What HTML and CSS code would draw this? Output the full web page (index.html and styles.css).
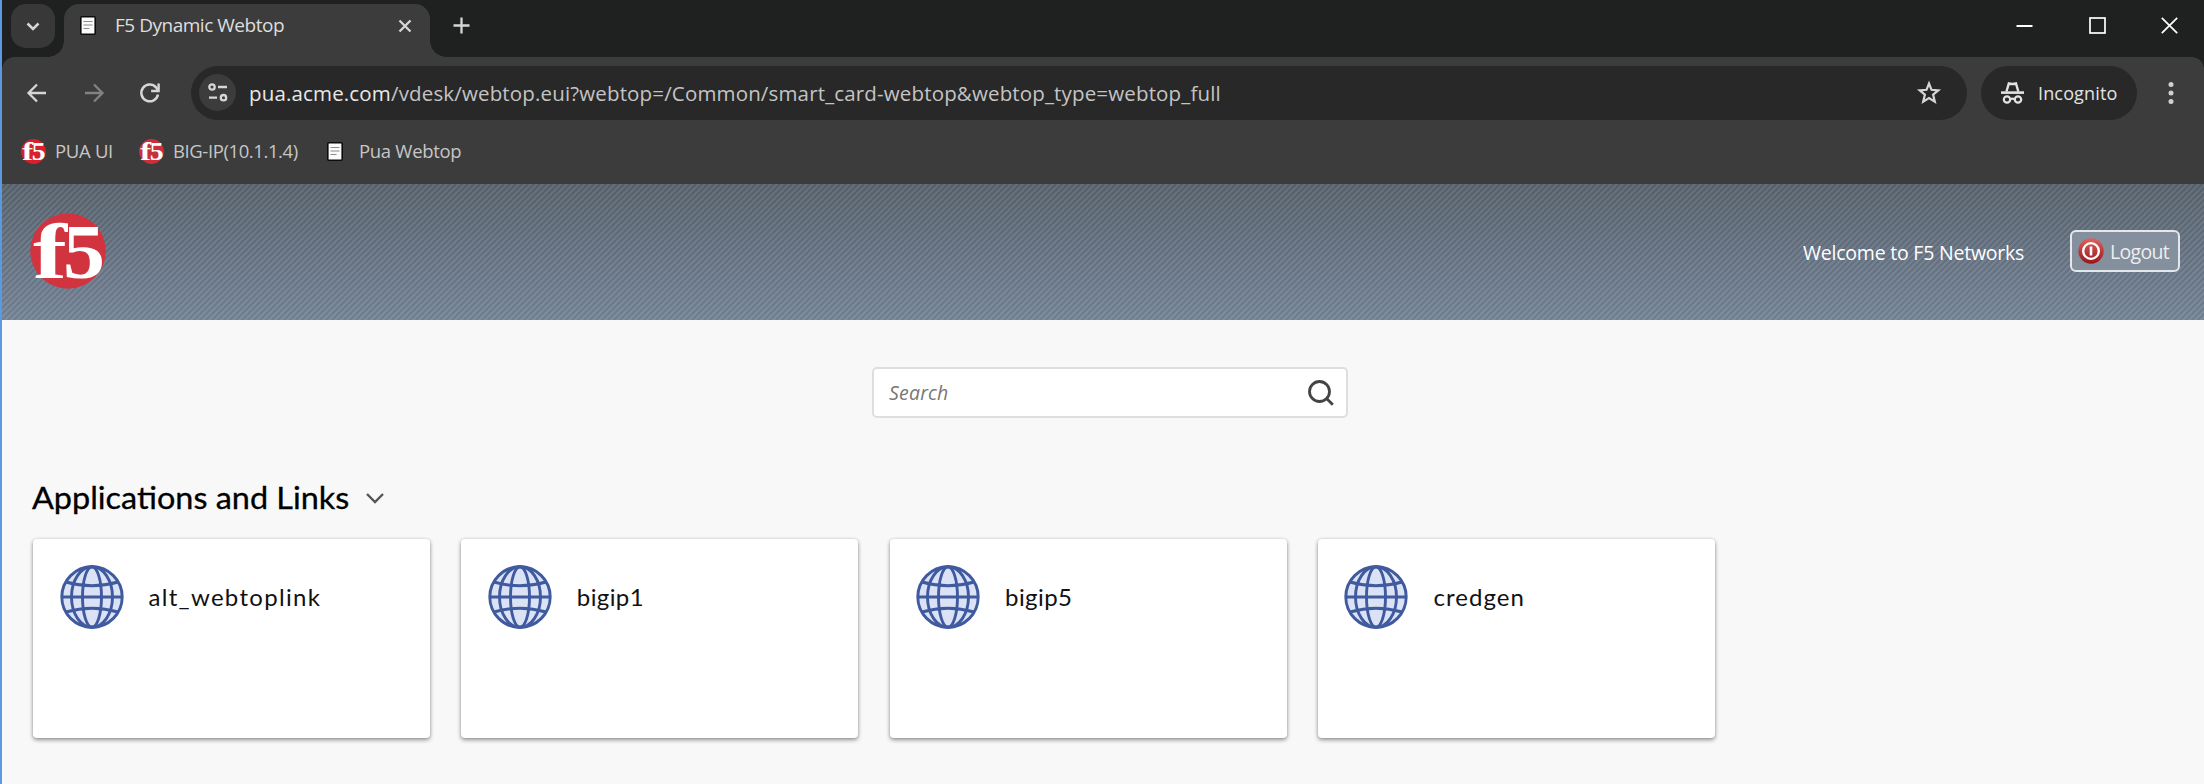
FILE: index.html
```html
<!DOCTYPE html>
<html lang="en">
<head>
<meta charset="utf-8">
<title>F5 Dynamic Webtop</title>
<link rel="stylesheet" href="styles.css">
</head>
<body>
<svg class="defs" width="0" height="0">
  <symbol id="page" viewBox="0 0 16 19"><rect x=".8" y=".8" width="14.400" height="17.400" rx="1" fill="#fafafa" stroke="#0c0c0c" stroke-width="1.600"/><path d="M3.500 5.500h9M3.500 9h9M3.500 12.500h6" stroke="#8a8a8a" stroke-width="1.200"/></symbol>
  <symbol id="globe" viewBox="0 0 64 64"><circle cx="32" cy="32" r="30.300" fill="#dbe2f5"/><g fill="none" stroke="#3f5a9f" stroke-width="2.900"><circle cx="32" cy="32" r="30.200"/><ellipse cx="32" cy="32" rx="9.500" ry="30.300"/><ellipse cx="32" cy="32" rx="20.500" ry="30.300"/><path d="M1.700 32h60.600M6 17q26 7.500 52 0M6 47q26-7.500 52 0"/></g></symbol>
</svg>
<div class="window">
  <div class="tabstrip">
    <div class="tab-search"><svg width="14" height="9" viewBox="0 0 14 9"><path d="M1.500 1.500 7 7l5.500-5.500" class="ln" stroke-width="2.500"/></svg></div>
    <div class="tab">
      <svg width="16" height="19"><use href="#page"/></svg>
      <span class="tab-title">F5 Dynamic Webtop</span>
      <svg width="14" height="14" viewBox="0 0 14 14"><path d="M1.500 1.500l11 11M12.500 1.500l-11 11" class="ln" stroke-width="2.300"/></svg>
    </div>
    <svg class="plus" width="17" height="17" viewBox="0 0 17 17"><path d="M8.500 .5v16M.5 8.500h16" class="ln" stroke-width="2.300"/></svg>
    <div class="controls">
      <svg width="17" height="17" viewBox="0 0 17 17"><path d="M.5 9h16" stroke="#fff" stroke-width="2"/></svg>
      <svg width="17" height="17" viewBox="0 0 17 17"><rect x="1" y="1" width="15" height="15" fill="none" stroke="#fff" stroke-width="1.700"/></svg>
      <svg width="17" height="17" viewBox="0 0 17 17"><path d="M.8.800l15.400 15.400M16.200.8.800 16.200" stroke="#fff" stroke-width="1.700"/></svg>
    </div>
  </div>
  <div class="toolbar">
    <div class="nav">
      <svg width="20" height="20" viewBox="0 0 20 20"><path d="M19 10H2M10 1.500 1.500 10l8.500 8.500" class="ln" stroke-width="2.300"/></svg>
      <svg class="dim" width="20" height="20" viewBox="0 0 20 20"><path d="M1 10h17M10 1.500l8.500 8.500-8.500 8.500" class="ln" stroke-width="2.300"/></svg>
      <svg width="20" height="20" viewBox="0 0 20 20"><path d="M18 11.500A8.400 8.400 0 1 1 16 4.300L18 7" class="ln" stroke-width="2.500"/><path d="M18.600 .5v7.500h-7.500" class="ln" stroke-width="2.400"/></svg>
    </div>
    <div class="omnibox">
      <div class="site"><svg width="20" height="19" viewBox="0 0 20 19"><g class="ln" stroke-width="2.300"><circle cx="4" cy="4" r="2.700"/><path d="M10 4h9M1 14.700h8"/><circle cx="15.500" cy="14.700" r="2.700"/></g></svg></div>
      <span class="url"><b>pua.acme.com</b>/vdesk/webtop.eui?webtop=/Common/smart_card-webtop&amp;webtop_type=webtop_full</span>
      <svg class="star" width="24" height="23" viewBox="0 0 24 23"><path d="M12 2.500l2.500 6.300 6.800.5-5.200 4.300 1.700 7L12 17l-5.800 3.600 1.700-7-5.200-4.300 6.800-.5z" class="ln" stroke-width="2.200"/></svg>
    </div>
    <div class="incog">
      <svg width="23" height="22" viewBox="0 0 23 22"><path d="M0 9.300h23v2.600H0z" fill="#e3e3e3"/><path d="M5.500 9.500 7.800 1.500c2 .6 5 .6 7.200 0l2.300 8" fill="none" stroke="#e3e3e3" stroke-width="2.400"/><g fill="none" stroke="#e3e3e3" stroke-width="2.200"><circle cx="6" cy="17.500" r="3.200"/><circle cx="17" cy="17.500" r="3.200"/><path d="M9 17.300q2.500-1.300 5 0"/></g></svg>
      <span>Incognito</span>
    </div>
    <svg class="dots" width="6" height="24" viewBox="0 0 6 24"><g fill="#d0d0d0"><circle cx="3" cy="3.500" r="2.500"/><circle cx="3" cy="12" r="2.500"/><circle cx="3" cy="20.500" r="2.500"/></g></svg>
  </div>
  <div class="bookmarks">
    <svg width="25" height="25" viewBox="0 0 76 76"><circle cx="38" cy="38" r="37.700" fill="#d8202c"/><text x="3" y="65" class="f5-text" textLength="34" lengthAdjust="spacingAndGlyphs">f</text><text x="33" y="65" class="f5-text" textLength="42" lengthAdjust="spacingAndGlyphs">5</text></svg><span class="bm bm-pua">PUA UI</span>
    <svg width="25" height="25" viewBox="0 0 76 76"><circle cx="38" cy="38" r="37.700" fill="#c9303a"/><text x="3" y="65" class="f5-text" textLength="34" lengthAdjust="spacingAndGlyphs">f</text><text x="33" y="65" class="f5-text" textLength="42" lengthAdjust="spacingAndGlyphs">5</text></svg><span class="bm bm-big">BIG-IP(10.1.1.4)</span>
    <svg width="16" height="19"><use href="#page"/></svg><span class="bm bm-web">Pua Webtop</span>
  </div>
  <header class="banner">
    <svg class="logo" width="76" height="76" viewBox="0 0 76 76"><circle cx="38" cy="38" r="37.700" fill="#d2343f"/><text x="3" y="65" class="f5-text" textLength="34" lengthAdjust="spacingAndGlyphs">f</text><text x="33" y="65" class="f5-text" textLength="42" lengthAdjust="spacingAndGlyphs">5</text></svg>
    <span class="welcome">Welcome to F5 Networks</span>
    <div class="logout">
      <svg width="26" height="26" viewBox="0 0 26 26"><defs><linearGradient id="red" x2="0" y2="1"><stop stop-color="#e0625e"/><stop offset="1" stop-color="#96161a"/></linearGradient></defs><circle cx="13" cy="13" r="12.700" fill="url(#red)"/><circle cx="13" cy="13" r="7.800" fill="none" stroke="#fff" stroke-width="2.300"/><path d="M13 8.500v9" stroke="#fff" stroke-width="2.600"/></svg>
      <span>Logout</span>
    </div>
  </header>
  <main>
    <div class="search"><span>Search</span><svg width="26" height="26" viewBox="0 0 26 26"><g fill="none" stroke="#444" stroke-width="2.800"><circle cx="11.500" cy="11.500" r="10"/><path d="M18.300 18.300l6.500 6.500"/></g></svg></div>
    <h1><span class="heading">Applications and Links</span><svg width="18" height="11" viewBox="0 0 18 11"><path d="M1 1l8 8 8-8" fill="none" stroke="#555" stroke-width="2.400"/></svg></h1>
    <div class="cards">
      <div class="card"><svg width="64" height="64"><use href="#globe"/></svg><span class="c1">alt_webtoplink</span></div>
      <div class="card"><svg width="64" height="64"><use href="#globe"/></svg><span class="c2">bigip1</span></div>
      <div class="card"><svg width="64" height="64"><use href="#globe"/></svg><span class="c2">bigip5</span></div>
      <div class="card"><svg width="64" height="64"><use href="#globe"/></svg><span class="c4">credgen</span></div>
    </div>
  </main>
</div>
</body>
</html>
```
FILE: styles.css
```css
* { box-sizing: border-box; }
body { margin: 0; background: #f8f8f8; font-family: "Open Sans", sans-serif; }
svg { flex: none; display: block; overflow: visible; }
.defs { position: absolute; }
.window { height: 784px; border-left: 2px solid #5b9ae0; overflow: hidden; }
.ln { fill: none; stroke: #d6d6d6; }
.f5-text { font: bold 79px "Liberation Serif", serif; fill: #fff; }
span { white-space: nowrap; }

.tabstrip { height: 57px; background: #1f2120; display: flex; align-items: flex-start; }
.tab-search { width: 44px; height: 44px; margin: 4px 0 0 9px; border-radius: 15px; background: #383838; display: flex; align-items: center; justify-content: center; }
.tab { position: relative; width: 366px; height: 53px; margin: 4px 0 0 9px; padding: 0 18px 10px 16px; background: #3c3c3c; border-radius: 15px 15px 0 0; display: flex; align-items: center; }
.tab::before, .tab::after { content: ""; position: absolute; bottom: 0; width: 16px; height: 16px; }
.tab::before { left: -16px; background: radial-gradient(circle at 0 0, transparent 15.5px, #3c3c3c 16px); }
.tab::after { right: -16px; background: radial-gradient(circle at 100% 0, transparent 15.5px, #3c3c3c 16px); }
.tab-title { margin: -2px 0 0 19px; flex: 1; font-size: 19px; letter-spacing: -0.48px; color: #dedede; }
.plus { margin: 17px 0 0 23px; }
.controls { margin: 17px 26px 0 auto; display: flex; gap: 55.500px; }

.toolbar { height: 71px; background: radial-gradient(circle at 12px 12px, #3c3c3c 11.500px, #1f2120 12px) 0 0 / 12px 12px no-repeat, radial-gradient(circle at 0 12px, #3c3c3c 11.500px, #1f2120 12px) 100% 0 / 12px 12px no-repeat, #3c3c3c; display: flex; align-items: center; padding: 0 27px 0 25px; }
.nav { display: flex; gap: 36.500px; width: 164px; }
.dim { opacity: .45; }
.omnibox { width: 1776px; height: 54px; border-radius: 27px; background: #282828; display: flex; align-items: center; padding: 0 26px 0 8px; }
.site { width: 37px; height: 37px; border-radius: 50%; background: #3c3c3c; display: flex; align-items: center; justify-content: center; }
.url { margin-left: 13px; font-size: 20.500px; letter-spacing: .155px; color: #c4c4c4; }
.url b { font-weight: 400; color: #e8e8e8; }
.star { margin-left: auto; }
.incog { margin-left: 14px; width: 156px; height: 54px; border-radius: 27px; background: #282828; display: flex; align-items: center; padding-left: 20px; gap: 14px; color: #e3e3e3; font-size: 18px; letter-spacing: .15px; }
.dots { margin-left: auto; margin-right: 3px; }

.bookmarks { height: 56px; background: #3c3c3c; display: flex; align-items: center; padding: 0 0 9px 19px; }
.bm { color: #c6c6c6; font-size: 18.500px; margin: -3px 0 0 9px; }
.bm-pua { width: 84px; letter-spacing: -.3px; }
.bm-big { width: 154px; letter-spacing: -.4px; }
.bm-web { margin-left: 16px; letter-spacing: -.3px; }

.banner { height: 136px; display: flex; align-items: center; padding: 0 24px 2px 28px; background: linear-gradient(135deg, rgba(255,255,255,.08) 25%, rgba(0,0,0,.03) 25% 50%, rgba(255,255,255,.08) 50% 75%, rgba(0,0,0,.03) 75%) 0 0 / 6px 6px, linear-gradient(#57626d, #748396); color: #fff; }
.welcome { margin: 2px 0 0 auto; width: 222px; font-size: 19.500px; letter-spacing: -.22px; }
.logout { margin-left: 45px; width: 110px; height: 42px; border: 2px solid #e4e8ec; border-radius: 6px; background: #84909e; display: flex; align-items: center; padding-left: 6px; gap: 6px; font-size: 19.500px; letter-spacing: -.7px; color: #eee; }

.search { width: 476px; height: 51px; margin: 47px 0 0 870px; border: 2px solid #dedede; border-radius: 5px; background: #fff; display: flex; align-items: center; justify-content: space-between; padding: 0 12px 0 15px; color: #777; font-style: italic; font-size: 19.500px; letter-spacing: .2px; }
h1 { margin: 62px 0 0 30px; height: 37px; font: 400 30px/37px Lato, sans-serif; display: flex; align-items: center; color: #000; -webkit-text-stroke: .3px #000; }
.heading { width: 334px; transform: scaleX(1.08) translateY(-1px); transform-origin: 0 50%; }
.cards { margin: 22px 0 0 31px; display: flex; gap: 31.300px; }
.card { width: 397px; height: 199px; border-radius: 4px; background: #fff; box-shadow: 0 2px 4px rgba(0,0,0,.4), 0 0 3px rgba(0,0,0,.12); padding: 26px 0 0 26.500px; display: flex; gap: 25px; font: 24px/64px Lato, sans-serif; color: #111; }
.c1 { letter-spacing: 1.300px; }
.c2 { letter-spacing: .4px; }
.c4 { letter-spacing: 1.050px; }
```
